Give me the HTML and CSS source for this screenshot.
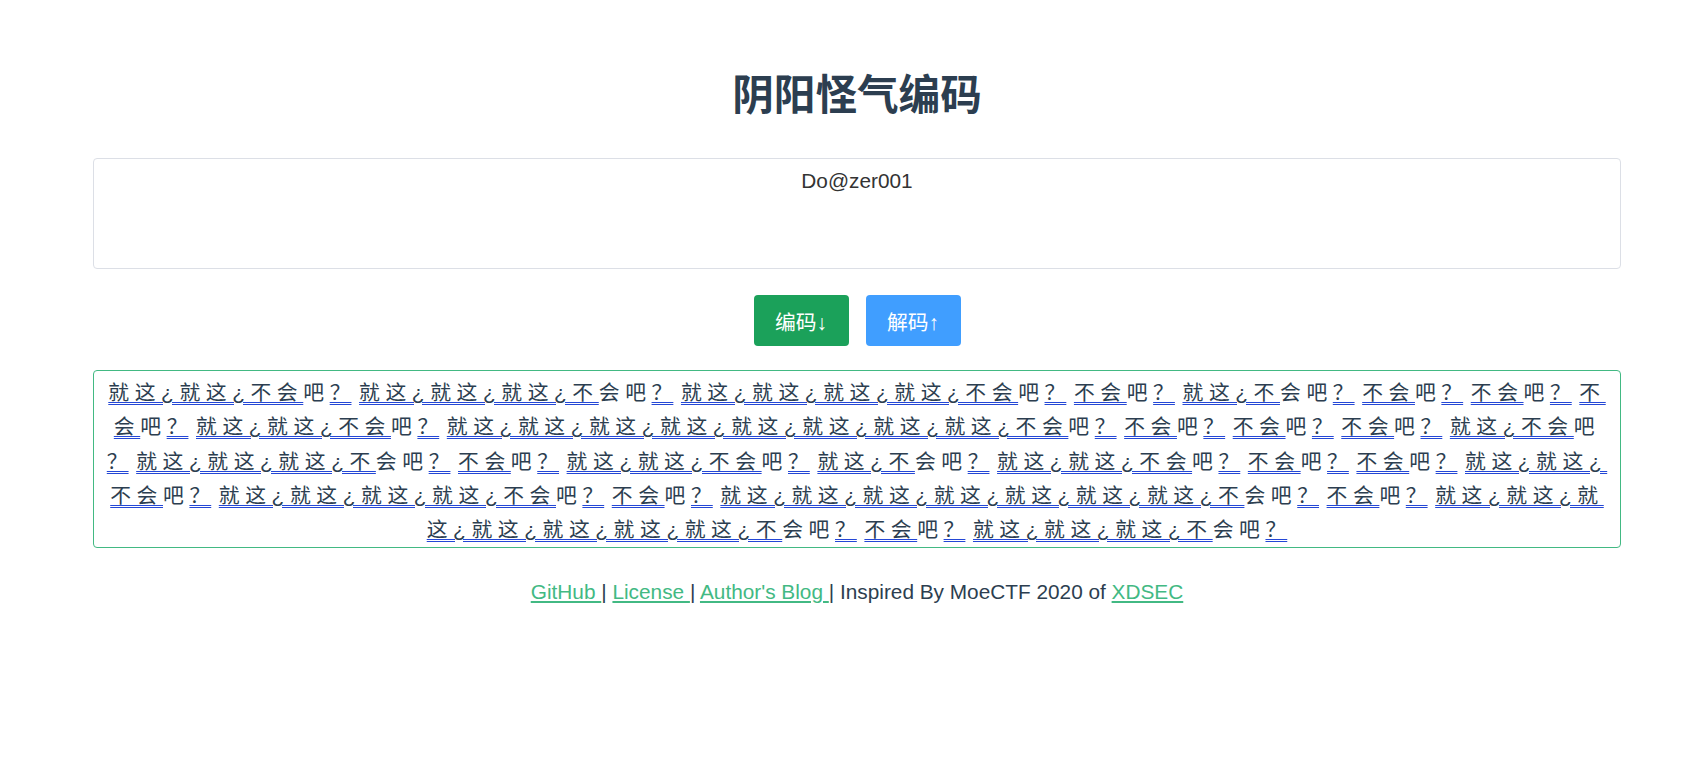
FILE: index.html
```html
<!DOCTYPE html>
<html lang="zh-CN">
<head>
<meta charset="utf-8">
<title>阴阳怪气编码</title>
<link rel="stylesheet" href="styles.css">
</head>
<body>
<div class="app">
  <h1 class="title">阴阳怪气编码</h1>
  <textarea class="input">Do@zer001</textarea>
  <div class="btns">
    <button class="btn btn-enc">编码↓</button>
    <button class="btn btn-dec">解码↑</button>
  </div>
  <div class="out"><span class="u">就这¿就这¿不会</span>吧<span class="u p">？</span> <span class="u">就这¿就这¿就这¿不</span>会吧<span class="u p">？</span> <span class="u">就这¿就这¿就这¿就这¿不会</span>吧<span class="u p">？</span> <span class="u">不会</span>吧<span class="u p">？</span> <span class="u">就这¿不</span>会吧<span class="u p">？</span> <span class="u">不会</span>吧<span class="u p">？</span> <span class="u">不会</span>吧<span class="u p">？</span> <span class="u">不</span><br><span class="u">会</span>吧<span class="u p">？</span> <span class="u">就这¿就这¿不会</span>吧<span class="u p">？</span> <span class="u">就这¿就这¿就这¿就这¿就这¿就这¿就这¿就这¿不会</span>吧<span class="u p">？</span> <span class="u">不会</span>吧<span class="u p">？</span> <span class="u">不会</span>吧<span class="u p">？</span> <span class="u">不会</span>吧<span class="u p">？</span> <span class="u">就这¿不会</span>吧<br><span class="u p">？</span> <span class="u">就这¿就这¿就这¿不</span>会吧<span class="u p">？</span> <span class="u">不会</span>吧<span class="u p">？</span> <span class="u">就这¿就这¿不会</span>吧<span class="u p">？</span> <span class="u">就这¿不</span>会吧<span class="u p">？</span> <span class="u">就这¿就这¿不会</span>吧<span class="u p">？</span> <span class="u">不会</span>吧<span class="u p">？</span> <span class="u">不会</span>吧<span class="u p">？</span> <span class="u">就这¿就这¿</span><br><span class="u">不会</span>吧<span class="u p">？</span> <span class="u">就这¿就这¿就这¿就这¿不会</span>吧<span class="u p">？</span> <span class="u">不会</span>吧<span class="u p">？</span> <span class="u">就这¿就这¿就这¿就这¿就这¿就这¿就这¿不</span>会吧<span class="u p">？</span> <span class="u">不会</span>吧<span class="u p">？</span> <span class="u">就这¿就这¿就</span><br><span class="u">这¿就这¿就这¿就这¿就这¿不</span>会吧<span class="u p">？</span> <span class="u">不会</span>吧<span class="u p">？</span> <span class="u">就这¿就这¿就这¿不</span>会吧<span class="u p">？</span></div>
  <p class="footer"><a href="#">GitHub </a>| <a href="#">License </a>| <a href="#">Author's Blog </a>| Inspired By MoeCTF 2020 of <a href="#">XDSEC</a></p>
</div>
</body>
</html>
```

FILE: styles.css
```css
html, body {
  margin: 0;
  padding: 0;
  background: #fff;
}

body {
  font-family: "Liberation Sans", Arial, "Noto Sans CJK SC", sans-serif;
  color: #2c3e50;
  font-size: 20.8px;
}

.app {
  padding: 71px 82px 0 93px;
  text-align: center;
}

.title {
  margin: 0;
  font-size: 41.6px;
  line-height: 50px;
  font-weight: 700;
  color: #2c3e50;
  font-family: "Liberation Sans", "Noto Sans CJK SC", sans-serif;
}

.input {
  display: block;
  box-sizing: border-box;
  width: 100%;
  height: 111px;
  margin: 37px 0 0;
  padding: 10px 12px;
  border: 1px solid #dcdfe6;
  border-radius: 4px;
  font-family: "Liberation Sans", "Noto Sans CJK SC", sans-serif;
  font-size: 20.8px;
  line-height: 24px;
  color: #333;
  text-align: center;
  resize: none;
  outline: none;
}

.btns {
  display: flex;
  justify-content: center;
  gap: 17px;
  margin-top: 26px;
}

.btn {
  height: 51px;
  width: 95px;
  padding: 0;
  border: none;
  border-radius: 4px;
  color: #fff;
  font-family: "Liberation Sans", "Noto Sans CJK SC", sans-serif;
  font-size: 20.8px;
  cursor: pointer;
}

.btn-enc {
  background: #1ba15a;
}

.btn-dec {
  background: #409eff;
}

.out {
  margin-top: 24px;
  border: 1px solid #42b983;
  border-radius: 4px;
  padding: 5px 6px 0;
  line-height: 34.3px;
  font-size: 20.8px;
  letter-spacing: 5.6px;
  word-spacing: -3.8px;
  white-space: nowrap;
  text-align: center;
  color: #2c3e50;
  font-family: "Liberation Sans", "Noto Sans CJK SC", sans-serif;
}

.u {
  text-decoration: underline double #2447d6;
  text-underline-offset: 2px;
  text-decoration-thickness: 1px;
}

.p {
  letter-spacing: 1px;
}

.footer {
  margin: 32px 0 0;
  line-height: 24px;
  font-size: 20.8px;
}

.footer a {
  color: #42b983;
  text-decoration: underline;
}
```
